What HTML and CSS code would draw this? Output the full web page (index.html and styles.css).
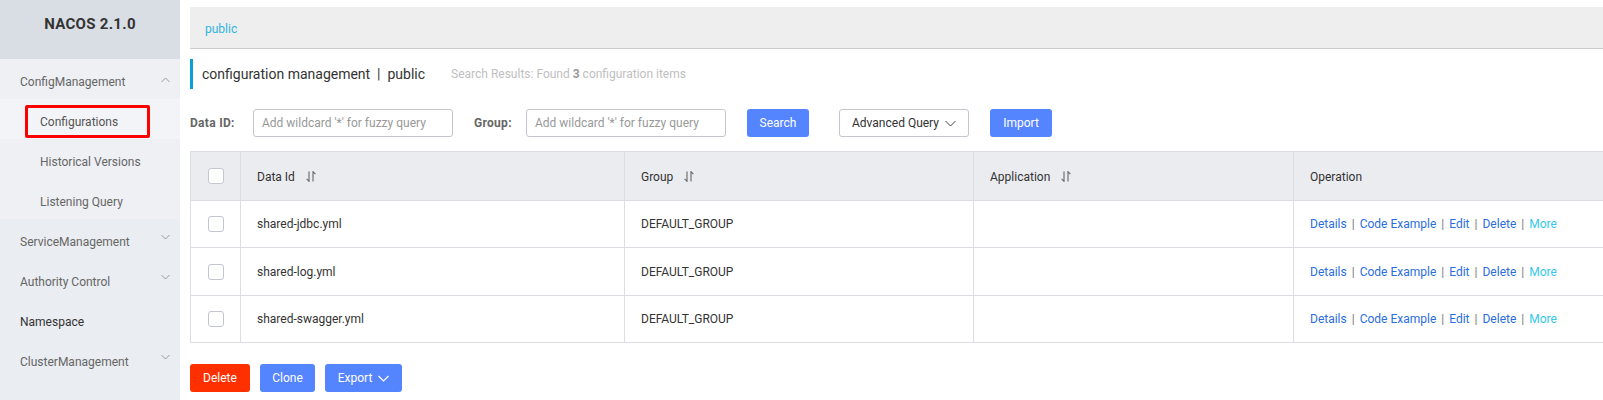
FILE: index.html
```html
<!DOCTYPE html>
<html>
<head>
<meta charset="utf-8">
<link rel="stylesheet" href="styles.css">
</head>
<body>
<div class="page">
  <aside class="sidebar">
    <div class="brand">NACOS 2.1.0</div>
    <ul class="menu">
      <li class="menu-item group-open">
        <span>ConfigManagement</span>
        <svg class="chev" width="9" height="6" viewBox="0 0 9 6"><polyline points="0.5,5 4.5,1 8.5,5" fill="none" stroke="#999" stroke-width="1"/></svg>
      </li>
      <li class="menu-item sub selected">
        <span>Configurations</span>
        <span class="highlight-box"></span>
      </li>
      <li class="menu-item sub"><span>Historical Versions</span></li>
      <li class="menu-item sub"><span>Listening Query</span></li>
      <li class="menu-item">
        <span>ServiceManagement</span>
        <svg class="chev down" width="9" height="6" viewBox="0 0 9 6"><polyline points="0.5,1 4.5,5 8.5,1" fill="none" stroke="#999" stroke-width="1"/></svg>
      </li>
      <li class="menu-item">
        <span>Authority Control</span>
        <svg class="chev down" width="9" height="6" viewBox="0 0 9 6"><polyline points="0.5,1 4.5,5 8.5,1" fill="none" stroke="#999" stroke-width="1"/></svg>
      </li>
      <li class="menu-item dark"><span>Namespace</span></li>
      <li class="menu-item">
        <span>ClusterManagement</span>
        <svg class="chev down" width="9" height="6" viewBox="0 0 9 6"><polyline points="0.5,1 4.5,5 8.5,1" fill="none" stroke="#999" stroke-width="1"/></svg>
      </li>
    </ul>
  </aside>

  <main class="content">
    <div class="ns-bar"><span class="ns-link">public</span></div>

    <div class="title-row">
      <span class="title">configuration management&nbsp;&nbsp;|&nbsp;&nbsp;public</span>
      <span class="result">Search Results: Found <strong>3</strong> configuration items</span>
    </div>

    <div class="search-form">
      <label class="lbl lbl-id">Data ID:</label>
      <div class="input">Add wildcard '*' for fuzzy query</div>
      <label class="lbl lbl-group">Group:</label>
      <div class="input">Add wildcard '*' for fuzzy query</div>
      <button class="btn primary btn-search">Search</button>
      <button class="btn normal btn-adv">Advanced Query
        <svg width="11" height="7" viewBox="0 0 11 7"><polyline points="0.5,1 5.5,6 10.5,1" fill="none" stroke="#444" stroke-width="1"/></svg>
      </button>
      <button class="btn primary btn-import">Import</button>
    </div>

    <table class="grid">
      <colgroup>
        <col class="c-check"><col class="c-id"><col class="c-group"><col class="c-app"><col class="c-op">
      </colgroup>
      <thead>
        <tr>
          <th class="check"><span class="cb"></span></th>
          <th>Data Id <svg class="sort" width="10" height="11" viewBox="0 0 10 11"><path d="M3 0.5V10.3L0.6 7.9M7 10.5V0.7L9.4 3.1" fill="none" stroke="#666" stroke-width="1.1"/></svg></th>
          <th>Group <svg class="sort" width="10" height="11" viewBox="0 0 10 11"><path d="M3 0.5V10.3L0.6 7.9M7 10.5V0.7L9.4 3.1" fill="none" stroke="#666" stroke-width="1.1"/></svg></th>
          <th>Application <svg class="sort" width="10" height="11" viewBox="0 0 10 11"><path d="M3 0.5V10.3L0.6 7.9M7 10.5V0.7L9.4 3.1" fill="none" stroke="#666" stroke-width="1.1"/></svg></th>
          <th>Operation</th>
        </tr>
      </thead>
      <tbody>
        <tr>
          <td class="check"><span class="cb"></span></td>
          <td>shared-jdbc.yml</td>
          <td>DEFAULT_GROUP</td>
          <td></td>
          <td class="ops"><a>Details</a><span class="sep">|</span><a>Code Example</a><span class="sep">|</span><a>Edit</a><span class="sep">|</span><a>Delete</a><span class="sep">|</span><a class="more">More</a></td>
        </tr>
        <tr>
          <td class="check"><span class="cb"></span></td>
          <td>shared-log.yml</td>
          <td>DEFAULT_GROUP</td>
          <td></td>
          <td class="ops"><a>Details</a><span class="sep">|</span><a>Code Example</a><span class="sep">|</span><a>Edit</a><span class="sep">|</span><a>Delete</a><span class="sep">|</span><a class="more">More</a></td>
        </tr>
        <tr>
          <td class="check"><span class="cb"></span></td>
          <td>shared-swagger.yml</td>
          <td>DEFAULT_GROUP</td>
          <td></td>
          <td class="ops"><a>Details</a><span class="sep">|</span><a>Code Example</a><span class="sep">|</span><a>Edit</a><span class="sep">|</span><a>Delete</a><span class="sep">|</span><a class="more">More</a></td>
        </tr>
      </tbody>
    </table>

    <div class="actions">
      <button class="btn danger btn-del">Delete</button>
      <button class="btn primary btn-clone">Clone</button>
      <button class="btn primary btn-export">Export
        <svg width="11" height="7" viewBox="0 0 11 7"><polyline points="0.5,1 5.5,6 10.5,1" fill="none" stroke="#fff" stroke-width="1.2"/></svg>
      </button>
    </div>
  </main>
</div>
</body>
</html>
```

FILE: styles.css
```css
* { box-sizing: border-box; }
html, body { margin: 0; padding: 0; background: #fff; }
body {
  font-family: Roboto, "Liberation Sans", Arial, sans-serif;
  font-size: 12px;
  color: #333;
  width: 1603px;
  height: 400px;
  overflow: hidden;
}
.page { display: flex; height: 400px; }

/* sidebar */
.sidebar {
  width: 180px;
  flex: 0 0 180px;
  background: #eaedf1;
  height: 400px;
}
.brand {
  height: 59px;
  background: #d9dde4;
  display: flex;
  align-items: center;
  justify-content: center;
  font-weight: bold;
  font-size: 15px;
  letter-spacing: 0.3px;
  color: #333;
  padding-bottom: 12px;
}
.menu { list-style: none; margin: 0; padding: 0; }
.menu-item {
  position: relative;
  height: 40px;
  display: flex;
  align-items: center;
  justify-content: space-between;
  padding: 6px 10px 0 20px;
  color: #666;
  font-size: 12px;
}
.group-open { background: #eef0f4; }
.menu-item.sub { padding-left: 40px; background: #eef0f4; }
.menu-item.selected { background: #f3f4f7; color: #555; }
.menu-item.dark { color: #333; }
.chev { margin-top: -5px; }
.chev.down { margin-top: -10px; }
.highlight-box {
  position: absolute;
  left: 25px;
  top: 6px;
  width: 125px;
  height: 33px;
  border: 3px solid #ff0000;
  border-radius: 2px;
}

/* content */
.content {
  flex: 1;
  min-width: 0;
  padding-left: 10px;
  overflow: hidden;
}
.ns-bar {
  margin-top: 7px;
  height: 42px;
  background: #eeeeee;
  border-bottom: 1px solid #cccccc;
  display: flex;
  align-items: center;
  padding: 2px 0 0 15px;
}
.ns-link { color: #2fb5e0; font-size: 12px; }

.title-row {
  margin-top: 10px;
  height: 30px;
  border-left: 3px solid #0aa0d6;
  display: flex;
  align-items: center;
  padding-left: 9px;
}
.title { font-size: 14px; color: #333; }
.result { margin-left: 26px; color: #c0c0c0; font-size: 12px; }
.result strong { color: #999; }

.search-form {
  margin-top: 20px;
  height: 28px;
  display: flex;
  align-items: center;
}
.lbl { font-weight: bold; color: #666; font-size: 12px; letter-spacing: 0.3px; }
.lbl-id { width: 63px; }
.lbl-group { margin-left: 21px; width: 52px; }
.input {
  width: 200px;
  height: 28px;
  border: 1px solid #c4c6cf;
  border-radius: 3px;
  color: #999;
  padding: 0 8px;
  display: flex;
  align-items: center;
  font-size: 12px;
}
.btn {
  height: 28px;
  border-radius: 3px;
  font-family: inherit;
  font-size: 12px;
  border: 1px solid transparent;
  padding: 0;
  display: inline-flex;
  align-items: center;
  justify-content: center;
  gap: 6px;
}
.primary { background: #5584ff; color: #fff; }
.danger { background: #ff3000; color: #fff; }
.normal { background: #fff; color: #333; border-color: #c4c6cf; }
.btn-search { width: 62px; margin-left: 21px; }
.btn-adv { width: 130px; margin-left: 30px; }
.btn-import { width: 62px; margin-left: 21px; }

/* table */
.grid {
  margin-top: 14px;
  width: 1425px;
  table-layout: fixed;
  border-collapse: separate;
  border-spacing: 0;
  border-top: 1px solid #dcdee3;
  border-left: 1px solid #dcdee3;
}
.c-check { width: 50px; }
.c-id { width: 384px; }
.c-group { width: 349px; }
.c-app { width: 320px; }
.grid th, .grid td {
  border-right: 1px solid #dcdee3;
  border-bottom: 1px solid #dcdee3;
  text-align: left;
  padding: 0 0 0 16px;
  font-weight: normal;
  color: #333;
  font-size: 12px;
  white-space: nowrap;
}
.grid th { background: #ebecf0; height: 49px; padding-top: 1px; }
.grid td { height: 47.4px; }
.grid th.check, .grid td.check { padding: 0; }
.cb {
  display: block;
  width: 16px;
  height: 16px;
  margin: 0 auto;
  border: 1px solid #c4c6cf;
  border-radius: 3px;
  background: #fff;
}
.sort { margin-left: 8px; vertical-align: -1px; }
.ops a { color: #2a6ee0; }
.ops .more { color: #33c8ec; }
.sep { color: #777; margin: 0 5px; }

.actions {
  margin-top: 21px;
  display: flex;
  gap: 10px;
}
.btn-del { width: 60px; }
.btn-clone { width: 55px; }
.btn-export { width: 77px; }
```
